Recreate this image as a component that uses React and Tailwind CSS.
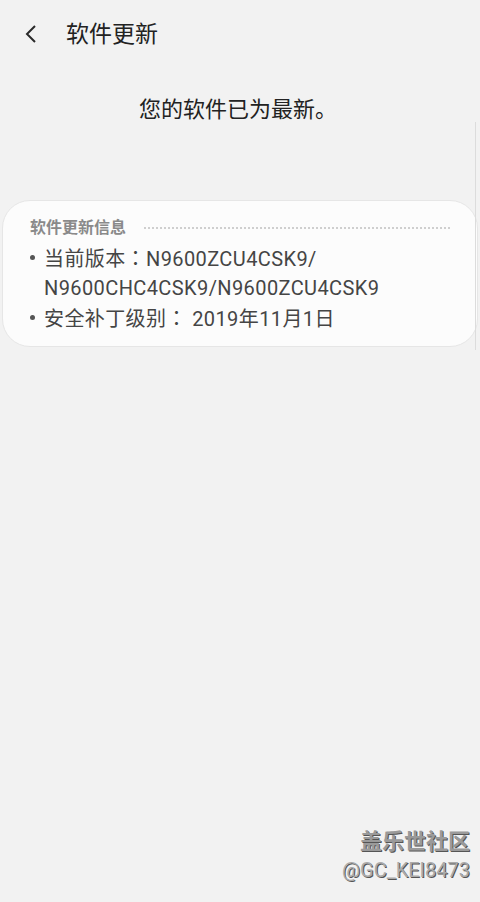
import React from 'react';

const font = { fontFamily: '"Roboto", "Noto Sans CJK SC", sans-serif' };
const colon = { fontFamily: '"Noto Sans CJK JP", sans-serif' };

function Dot() {
  return (
    <span className="w-[14px] shrink-0 flex items-center h-[29px]">
      <span className="block w-[5px] h-[5px] rounded-full bg-[#555]" />
    </span>
  );
}

export default function App() {
  return (
    <div className="relative w-[480px] h-[902px] bg-[#f2f2f2] overflow-hidden" style={font}>
      {/* 顶部栏 */}
      <div className="flex items-center h-[68px] pl-[22px]">
        <svg width="20" height="20" viewBox="0 0 20 20" className="text-[#2a2a2a]">
          <path d="M13 2 L5 10 L13 18" fill="none" stroke="currentColor" strokeWidth="2" />
        </svg>
        <span className="ml-[24px] text-[23px] text-[#222] leading-none">软件更新</span>
      </div>

      <p className="mt-[31px] text-center text-[22px] text-[#222] leading-none pr-[4px]">您的软件已为最新。</p>

      {/* 信息卡片 */}
      <div className="mt-[79px] mx-[2px] w-[476px] rounded-[28px] bg-[#fcfcfc] border border-[#e6e6e6] pl-[27px] pr-[26px] pt-[19px] pb-[12px]">
        <div className="flex items-center">
          <span className="text-[16px] font-bold text-[#8a8a8a] leading-none">软件更新信息</span>
          <div className="flex-1 ml-[18px] mr-[1px] border-t-2 border-dotted border-[#cfcfcf]" />
        </div>
        <ul className="mt-[7px] text-[20px] tracking-[0.4px] text-[#454545] leading-[29px]">
          <li className="flex">
            <Dot />
            <span>当前版本<span style={colon}>：</span>N9600ZCU4CSK9/<br />N9600CHC4CSK9/N9600ZCU4CSK9</span>
          </li>
          <li className="flex">
            <Dot />
            <span>安全补丁级别<span style={colon}>：</span> 2019年11月1日</span>
          </li>
        </ul>
      </div>

      {/* 滚动条边线 */}
      <div className="absolute left-[475px] top-[122px] h-[228px] w-px bg-[#dcdcdc]" />

      {/* 水印 */}
      <div className="absolute right-[10px] top-[831px] text-right leading-none">
        <div className="text-[22px] font-bold text-[#9a9a9a] [text-shadow:1px_1px_0_#555]">盖乐世社区</div>
        <div className="mt-[7px] text-[20px] text-[#aaaaaa] [text-shadow:1px_1px_0_#555]">@GC_KEI8473</div>
      </div>
    </div>
  );
}
